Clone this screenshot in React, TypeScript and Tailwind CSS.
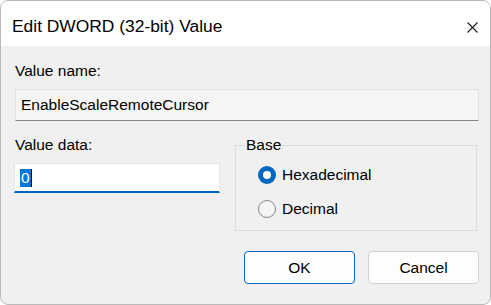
import React from 'react';

const font = { fontFamily: '"Liberation Sans", Arial, sans-serif' };

const Radio = ({ checked, label }: { checked?: boolean; label: string }) => (
  <div className="flex items-center h-[34px]">
    {checked ? (
      <span className="w-[18px] h-[18px] rounded-full bg-[#0067c0] flex items-center justify-center">
        <span className="w-[8px] h-[8px] rounded-full bg-white" />
      </span>
    ) : (
      <span className="w-[18px] h-[18px] rounded-full border border-[#878787] bg-[#f5f5f5]" />
    )}
    <span className="ml-[6px]">{label}</span>
  </div>
);

const App = () => {
  return (
    <div className="w-[491px] h-[305px] bg-white text-[15.5px] leading-[18px] text-black" style={font}>
      <div className="w-full h-full flex flex-col bg-[#f0f0f0] rounded-[8px] border border-[#b9b9b9] overflow-hidden">
        {/* title bar */}
        <div className="h-[45px] bg-white flex items-center justify-between shrink-0">
          <span className="pl-[11px] text-[17.4px] pt-[4px]">Edit DWORD (32-bit) Value</span>
          <div className="w-[36px] h-full flex items-center justify-center pt-[8px]">
            <svg width="11" height="11" viewBox="0 0 11 11">
              <path d="M0.5 0.5 L10.5 10.5 M10.5 0.5 L0.5 10.5" stroke="#1a1a1a" strokeWidth="1.1" />
            </svg>
          </div>
        </div>

        <div className="flex flex-col px-[13px] pt-[16px]">
          <span className="ml-[1px]">Value name:</span>
          <div className="mt-[9px] h-[32px] ml-[1px] w-[464px] bg-[#f5f5f5] border border-[#e2e2e2] border-b-[#868686] flex items-center pl-[5px]">
            EnableScaleRemoteCursor
          </div>

          <div className="flex mt-[15px]">
            <div className="w-[207px] flex flex-col">
              <span className="ml-[1px]">Value data:</span>
              <div className="mt-[9px] h-[30px] bg-white border border-[#e5e5e5] border-b-2 border-b-[#0067c0] flex items-center pl-[5px]">
                <span className="bg-[#0078d7] text-white leading-[18px] px-[1px]">0</span>
                <span className="w-[1px] h-[18px] bg-black" />
              </div>
            </div>

            <fieldset className="ml-[15px] w-[243px] h-[95px] border border-[#dcdcdc] px-[22px]">
              <legend className="ml-[-13px] px-[1px]">Base</legend>
              <div className="flex flex-col mt-[4px]">
                <Radio checked label="Hexadecimal" />
                <Radio label="Decimal" />
              </div>
            </fieldset>
          </div>

          <div className="flex justify-end gap-[13px] mt-[20px] mr-[-2px]">
            <button className="w-[111px] h-[33px] rounded-[4px] bg-[#fdfdfd] border border-[#0067c0]">OK</button>
            <button className="w-[111px] h-[33px] rounded-[4px] bg-[#fdfdfd] border border-[#d0d0d0]">Cancel</button>
          </div>
        </div>
      </div>
    </div>
  );
};

export default App;
